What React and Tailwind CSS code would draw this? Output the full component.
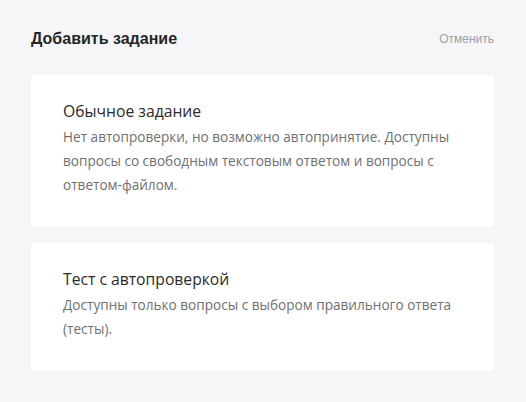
const types = [
  {
    id: "regular",
    title: "Обычное задание",
    text: "Нет автопроверки, но возможно автопринятие. Доступны вопросы со свободным текстовым ответом и вопросы с ответом-файлом.",
  },
  {
    id: "test",
    title: "Тест с автопроверкой",
    text: "Доступны только вопросы с выбором правильного ответа (тесты).",
  },
];

const TypeCard = ({ title, text }) => (
  <div className="bg-white rounded-[4px] pl-8 pr-8 pt-[24px] pb-[30px] cursor-pointer">
    <h3 className="text-[15.7px] leading-[24px] font-medium text-[#2b2b2b] font-['Open_Sans',sans-serif]">
      {title}
    </h3>
    <p className="mt-[2px] text-[13.6px] leading-[24px] text-[#707070] font-['Open_Sans',sans-serif]">
      {text}
    </p>
  </div>
);

export default function App() {
  return (
    <div className="min-h-[402px] w-full bg-[#f6f6f8] pt-[27px] pl-[31px] pr-[32px] pb-8">
      <div className="flex items-center justify-between h-[24px]">
        <h2 className="text-[16px] font-bold text-[#262626] font-['Liberation_Sans',Arial,sans-serif]">
          Добавить задание
        </h2>
        <button className="text-[12px] text-[#9aa0a8] font-['Liberation_Sans',Arial,sans-serif]">
          Отменить
        </button>
      </div>
      <div className="mt-[24px] flex flex-col gap-4">
        {types.map((t) => (
          <TypeCard key={t.id} title={t.title} text={t.text} />
        ))}
      </div>
    </div>
  );
}
